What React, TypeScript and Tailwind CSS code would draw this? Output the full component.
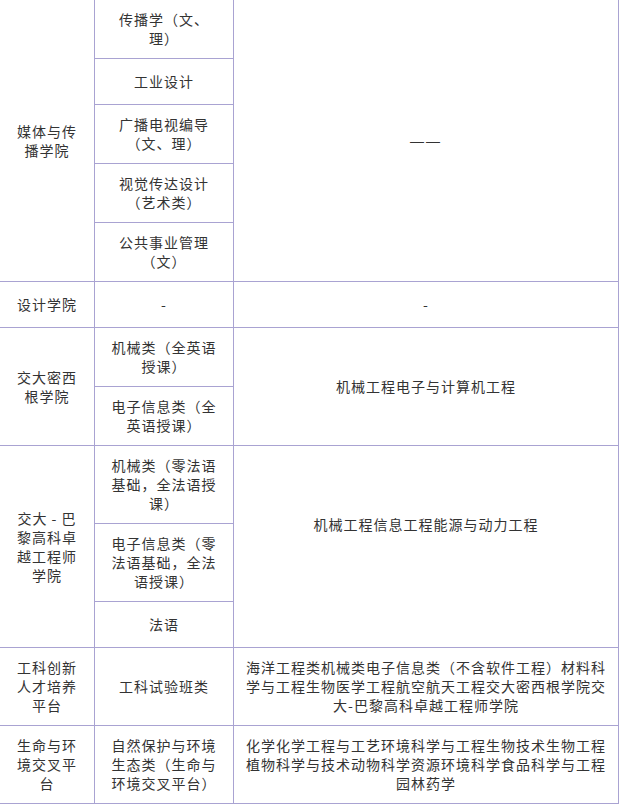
const line = "border-r border-b border-[#a9a3d2]";
const cell = `${line} px-[10px] py-[10px] text-center align-middle`;
const first = `${line} px-[11px] py-[10px] text-center align-middle`;
const one = `${cell} h-[46px]`;

const App = () => {
  return (
    <div
      className="w-[621px] bg-white text-[14px] leading-[19px] tracking-[1px] text-[#333333] [text-spacing-trim:space-all]"
      style={{ fontFamily: '"Noto Sans CJK SC", "Noto Sans", sans-serif' }}
    >
      <table className="w-[619px] table-fixed border-separate border-spacing-0">
        <colgroup>
          <col className="w-[95px]" />
          <col className="w-[139px]" />
          <col className="w-[385px]" />
        </colgroup>
        <tbody>
          <tr>
            <td rowSpan={5} className={first}>媒体与传播学院</td>
            <td className={cell}>传播学（文、理）</td>
            <td rowSpan={5} className={cell}>
              <span className="font-['Liberation_Sans'] tracking-[2px]">——</span>
            </td>
          </tr>
          <tr>
            <td className={one}>工业设计</td>
          </tr>
          <tr>
            <td className={cell}>广播电视编导（文、理）</td>
          </tr>
          <tr>
            <td className={cell}>视觉传达设计（艺术类）</td>
          </tr>
          <tr>
            <td className={cell}>公共事业管理（文）</td>
          </tr>

          <tr>
            <td className={`${first} h-[46px]`}>设计学院</td>
            <td className={one}>-</td>
            <td className={one}>-</td>
          </tr>

          <tr>
            <td rowSpan={2} className={first}>交大密西根学院</td>
            <td className={cell}>机械类（全英语授课）</td>
            <td rowSpan={2} className={cell}>机械工程电子与计算机工程</td>
          </tr>
          <tr>
            <td className={cell}>电子信息类（全英语授课）</td>
          </tr>

          <tr>
            <td rowSpan={3} className={first}>交大 - 巴黎高科卓越工程师学院</td>
            <td className={cell}>机械类（零法语基础，全法语授课）</td>
            <td rowSpan={2} className="border-r border-[#a9a3d2] px-[10px] py-[10px] text-center align-middle">
              机械工程信息工程能源与动力工程
            </td>
          </tr>
          <tr>
            <td className={cell}>电子信息类（零法语基础，全法语授课）</td>
          </tr>
          <tr>
            <td className={one}>法语</td>
            <td className={one}></td>
          </tr>

          <tr>
            <td className={first}>工科创新人才培养平台</td>
            <td className={cell}>工科试验班类</td>
            <td className={cell}>
              海洋工程类机械类电子信息类（不含软件工程）材料科学与工程生物医学工程航空航天工程交大密西根学院交大-巴黎高科卓越工程师学院
            </td>
          </tr>
          <tr>
            <td className={first}>生命与环境交叉平台</td>
            <td className={cell}>自然保护与环境生态类（生命与环境交叉平台）</td>
            <td className={cell}>
              化学化学工程与工艺环境科学与工程生物技术生物工程植物科学与技术动物科学资源环境科学食品科学与工程园林药学
            </td>
          </tr>
        </tbody>
      </table>
    </div>
  );
};

export default App;
